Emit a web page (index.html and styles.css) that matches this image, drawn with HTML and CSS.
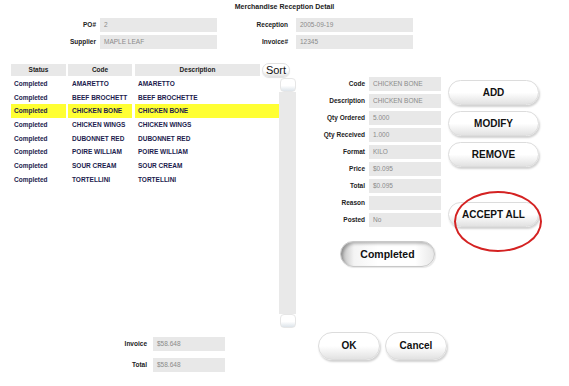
FILE: index.html
```html
<!DOCTYPE html>
<html lang="en">
<head>
    <meta charset="UTF-8">
    <title>Merchandise Reception Detail</title>
    <link rel="stylesheet" href="styles.css">
</head>
<body>
    <div class="title">Merchandise Reception Detail</div>

    <div class="top-fields">
        <div class="label">PO#</div>
        <div class="field">2</div>
        <div class="label label-wide">Reception</div>
        <div class="field">2005-09-19</div>
        <div class="label">Supplier</div>
        <div class="field">MAPLE LEAF</div>
        <div class="label label-wide">Invoice#</div>
        <div class="field">12345</div>
    </div>

    <div class="main">
        <div class="left">
            <div class="head-row">
                <div class="col-status head-cell">Status</div>
                <div class="col-code head-cell">Code</div>
                <div class="col-desc head-cell head-desc">Description</div>
                <div class="sort-btn">Sort</div>
            </div>

            <div class="list-wrap">
                <div class="list">
                    <div class="row"><div class="col-status">Completed</div><div class="col-code">AMARETTO</div><div class="col-desc">AMARETTO</div></div>
                    <div class="row"><div class="col-status">Completed</div><div class="col-code">BEEF BROCHETT</div><div class="col-desc">BEEF BROCHETTE</div></div>
                    <div class="row selected"><div class="col-status">Completed</div><div class="col-code">CHICKEN BONE</div><div class="col-desc">CHICKEN BONE</div></div>
                    <div class="row"><div class="col-status">Completed</div><div class="col-code">CHICKEN WINGS</div><div class="col-desc">CHICKEN WINGS</div></div>
                    <div class="row"><div class="col-status">Completed</div><div class="col-code">DUBONNET RED</div><div class="col-desc">DUBONNET RED</div></div>
                    <div class="row"><div class="col-status">Completed</div><div class="col-code">POIRE WILLIAM</div><div class="col-desc">POIRE WILLIAM</div></div>
                    <div class="row"><div class="col-status">Completed</div><div class="col-code">SOUR CREAM</div><div class="col-desc">SOUR CREAM</div></div>
                    <div class="row"><div class="col-status">Completed</div><div class="col-code">TORTELLINI</div><div class="col-desc">TORTELLINI</div></div>
                </div>
                <div class="scrollbar">
                    <div class="scroll-btn"></div>
                    <div class="scroll-track"></div>
                    <div class="scroll-btn"></div>
                </div>
            </div>

            <div class="totals">
                <div class="label">Invoice</div>
                <div class="field">$58.648</div>
                <div class="label">Total</div>
                <div class="field">$58.648</div>
            </div>
        </div>

        <div class="right">
            <div class="detail-row">
                <div class="detail">
                    <div class="label">Code</div><div class="field">CHICKEN BONE</div>
                    <div class="label">Description</div><div class="field">CHICKEN BONE</div>
                    <div class="label">Qty Ordered</div><div class="field">5.000</div>
                    <div class="label">Qty Received</div><div class="field">1.000</div>
                    <div class="label">Format</div><div class="field">KILO</div>
                    <div class="label">Price</div><div class="field">$0.095</div>
                    <div class="label">Total</div><div class="field">$0.095</div>
                    <div class="label">Reason</div><div class="field"></div>
                    <div class="label">Posted</div><div class="field">No</div>
                </div>
                <div class="actions">
                    <div class="pill">ADD</div>
                    <div class="pill">MODIFY</div>
                    <div class="pill">REMOVE</div>
                    <div class="accept">
                        <div class="pill">ACCEPT ALL</div>
                    </div>
                </div>
            </div>

            <div class="pill pressed">Completed</div>

            <div class="footer-btns">
                <div class="pill big">OK</div>
                <div class="pill big">Cancel</div>
            </div>
        </div>
    </div>
</body>
</html>
```

FILE: styles.css
```css
* {
    margin: 0;
    padding: 0;
    box-sizing: border-box;
}

body {
    font-family: 'Liberation Sans', Arial, sans-serif;
    background-color: #fff;
    color: #222;
    width: 569px;
    height: 386px;
    overflow: hidden;
}

.title {
    font-size: 7px;
    font-weight: bold;
    text-align: center;
    padding-top: 3px;
    height: 18px;
    line-height: 8px;
}

.label {
    font-size: 6.5px;
    font-weight: bold;
    color: #222;
    text-align: right;
    line-height: 14px;
    padding-right: 4px;
}

.field {
    background-color: #e8e8e8;
    color: #8a8a8a;
    font-size: 6.5px;
    line-height: 14px;
    height: 14px;
    padding-left: 4px;
    white-space: nowrap;
}

/* top block */
.top-fields {
    display: grid;
    grid-template-columns: 100px 117px 79px 117px;
    row-gap: 3px;
}

.top-fields .label-wide {
    padding-right: 8px;
}

.main {
    display: flex;
    margin-top: 14px;
}

/* left: list */
.left {
    margin-left: 11px;
    width: 285px;
}

.head-row {
    display: flex;
    align-items: center;
    height: 14px;
}

.col-status {
    width: 55px;
    padding-left: 3px;
}

.col-code {
    width: 64px;
    margin-left: 2px;
    padding-left: 4px;
}

.col-desc {
    flex: 1;
    margin-left: 3px;
    padding-left: 3px;
}

.head-cell {
    background-color: #e8e8e8;
    height: 12px;
    line-height: 12px;
    font-size: 6.5px;
    font-weight: bold;
    text-align: center;
    padding-left: 0;
}

.head-desc {
    flex: none;
    width: 125px;
}

.sort-btn {
    margin-left: 2px;
    width: 28px;
    height: 14px;
    border-radius: 7px;
    background: linear-gradient(#fff 55%, #e6e6e6);
    border: 1px solid #e2e2e2;
    box-shadow: 0 1px 1px rgba(0, 0, 0, 0.12);
    font-size: 11px;
    line-height: 12px;
    text-align: center;
    color: #111;
}

.list-wrap {
    display: flex;
    height: 251px;
}

.list {
    width: 268px;
}

.row {
    display: flex;
    height: 13.7px;
    line-height: 13.7px;
    font-size: 6.5px;
    font-weight: bold;
    color: #1c1c4e;
    white-space: nowrap;
}

.row.selected .col-status,
.row.selected .col-code,
.row.selected .col-desc {
    background-color: #ffff33;
}

.scrollbar {
    width: 17px;
    display: flex;
    flex-direction: column;
    padding-top: 1px;
}

.scroll-track {
    flex: 1;
    background-color: #e9e9e9;
}

.scroll-btn {
    height: 14px;
    margin-left: 1px;
    border-radius: 4px;
    background: linear-gradient(#fff 55%, #dde4ea);
    border: 1px solid #e6e6e6;
}

.totals {
    display: grid;
    grid-template-columns: 142px 72px;
    row-gap: 7px;
    margin-top: 9px;
}

.totals .label {
    padding-right: 6px;
}

/* right: detail */
.right {
    margin-left: 0;
    width: 260px;
    padding-top: 14px;
}

.detail-row {
    display: flex;
}

.detail {
    display: grid;
    grid-template-columns: 73px 72px;
    grid-auto-rows: 14px;
    row-gap: 3px;
}

.detail .label {
    padding-right: 4px;
}

.actions {
    margin-left: 7px;
    width: 91px;
    padding-top: 3px;
    display: flex;
    flex-direction: column;
    gap: 6px;
}

.pill {
    height: 25px;
    border-radius: 13px;
    background: linear-gradient(#fff 50%, #e2e2e2);
    border: 1px solid #dcdcdc;
    box-shadow: 1px 2px 2px rgba(0, 0, 0, 0.18);
    font-size: 10px;
    font-weight: bold;
    color: #111;
    text-align: center;
    line-height: 23px;
}

.accept {
    position: relative;
    margin-top: 29px;
}

.accept::after {
    content: "";
    position: absolute;
    left: 6px;
    top: -11px;
    width: 84px;
    height: 57px;
    border: 2px solid #d42222;
    border-radius: 50%;
}

.pressed {
    width: 95px;
    height: 26px;
    margin-top: 14px;
    margin-left: 44px;
    font-size: 10.5px;
    line-height: 24px;
    background: linear-gradient(90deg, #bdbdbd 0%, #f4f4f4 14%, #fff 40%, #fff 80%, #e8e8e8 100%);
    border: 1px solid #c8c8c8;
    box-shadow: inset 2px 2px 3px rgba(0, 0, 0, 0.25), 1px 1px 1px rgba(0, 0, 0, 0.1);
}

.footer-btns {
    display: flex;
    gap: 5px;
    margin-top: 65px;
    margin-left: 22px;
}

.big {
    width: 62px;
    height: 28px;
    border-radius: 14px;
    line-height: 26px;
}
```
